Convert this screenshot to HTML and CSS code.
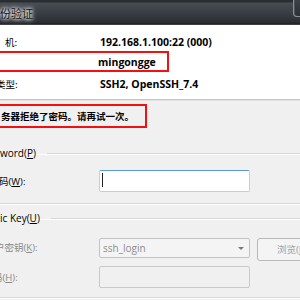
FILE: index.html
```html
<!DOCTYPE html>
<html lang="zh-CN">
<head>
<meta charset="utf-8">
<title>SSH用户身份验证</title>
<link rel="stylesheet" href="styles.css">
</head>
<body>
<div class="win">
  <div class="titlebar">
    <span class="title">份验证</span>
    <div class="close-btn"></div>
  </div>
  <div class="info">
    <div class="row">
      <span class="lbl lbl-host">机:</span><span class="val">192.168.1.100:22 (000)</span>
    </div>
    <div class="row mark">
      <span class="lbl"></span><span class="val">mingongge</span>
    </div>
    <div class="row row-last">
      <span class="lbl lbl-type">类型:</span><span class="val">SSH2, OpenSSH_7.4</span>
    </div>
  </div>
  <div class="sep"></div>
  <div class="msg mark">务器拒绝了密码。请再试一次。</div>
  <fieldset class="group group-pw">
    <legend>word(<u>P</u>)</legend>
    <div class="field">
      <label class="flbl flbl-w">码(<u>W</u>):</label>
      <div class="input focused"><span class="caret"></span></div>
    </div>
  </fieldset>
  <fieldset class="group group-key">
    <legend>ic Key(<u>U</u>)</legend>
    <div class="field">
      <label class="flbl flbl-k dis">户密钥(<u>K</u>):</label>
      <div class="select"><span>ssh_login</span><span class="arrow"></span></div>
      <div class="btn">浏览(<u>B</u>)...</div>
    </div>
    <div class="field">
      <label class="flbl flbl-h dis">码(<u>H</u>):</label>
      <div class="input disabled"></div>
    </div>
  </fieldset>
</div>
</body>
</html>
```

FILE: styles.css
```css
html, body {
  margin: 0;
  padding: 0;
}
body {
  width: 300px;
  height: 300px;
  overflow: hidden;
  background: #f0f0f0;
  font-family: "Open Sans", "Noto Sans CJK SC", sans-serif;
  font-size: 9.5px;
  color: #000;
}
.win {
  width: 300px;
}
.titlebar {
  height: 25px;
  box-sizing: border-box;
  display: flex;
  align-items: flex-start;
  background: linear-gradient(#2a2e32 0, #2a2e32 2px, #474d53 3px, #3a3f45 12px, #2c3035 22px, #1e2125 24px, #5c6166 25px);
}
.title {
  padding-top: 6px;
  white-space: nowrap;
  font-family: "Noto Sans CJK SC", sans-serif;
  font-size: 11px;
  line-height: 14px;
  color: #111;
  text-shadow: 0 0 4px #fff, 0 0 6px #e8e8e8, 0 0 3px #fff;
}
.close-btn {
  margin-left: auto;
  margin-right: -30px;
  width: 37px;
  height: 17px;
  box-sizing: border-box;
  border: 1px solid #8b9096;
  border-top: 0;
  border-radius: 0 0 4px 4px;
  background: linear-gradient(#3b4046, #2d3137);
  box-shadow: inset 1px 0 0 #4c5258;
}
.info {
  background: #fff;
  height: 74px;
  box-sizing: border-box;
  padding-top: 8px;
}
.row {
  display: flex;
  height: 18px;
  align-items: center;
  white-space: nowrap;
}
.row.mark {
  height: 21px;
  width: 171px;
  margin-left: -2px;
  box-sizing: border-box;
}
.row.mark .lbl {
  width: 98px;
}
.row-last {
  height: 24px;
}
.lbl {
  width: 100px;
  box-sizing: border-box;
  font-family: "Noto Sans CJK SC", sans-serif;
  font-size: 9.5px;
}
.lbl-host {
  padding-left: 5px;
}
.lbl-type {
  margin-left: -4px;
  width: 104px;
}
.val {
  font-weight: bold;
  font-size: 10.5px;
}
.mark {
  border: 2px solid #f21010;
}
.sep {
  height: 2px;
  background: linear-gradient(#c6c6c6 0, #c6c6c6 1px, #e2e2e2 1px);
}
.msg {
  margin-top: 3px;
  margin-left: -2px;
  width: 149px;
  height: 24px;
  box-sizing: border-box;
  padding-left: 1px;
  line-height: 20px;
  font-family: "Noto Sans CJK SC", sans-serif;
  font-weight: bold;
  font-size: 9.5px;
  white-space: nowrap;
}
.group {
  margin: 0 0 0 -10px;
  width: 400px;
  padding: 0;
  border: 1px solid #d6d9dc;
  border-radius: 3px;
  box-shadow: 0 1px 0 #fff, inset 0 1px 0 #fff;
  box-sizing: border-box;
}
.group legend {
  margin-left: 8px;
  padding: 0 11px 0 1px;
  font-size: 10px;
  line-height: 13px;
  white-space: nowrap;
}
.group-pw {
  margin-top: 19px;
  height: 57px;
}
.group-key {
  margin-top: 8px;
  height: 86px;
}
.field {
  display: flex;
  align-items: center;
  white-space: nowrap;
}
.group-pw .field {
  margin-top: 10px;
}
.group-key .field {
  margin-top: 13px;
  align-items: flex-start;
}
.group-key .field + .field {
  margin-top: 5px;
  align-items: center;
}
.flbl {
  width: 108px;
  box-sizing: border-box;
  font-size: 9.5px;
}
.flbl-w {
  padding-left: 8px;
}
.flbl-k {
  padding-left: 4px;
  line-height: 20px;
}
.flbl-h {
  padding-left: 2px;
}
.flbl.dis {
  color: #8a8a8a;
}
.input {
  width: 151px;
  height: 22px;
  box-sizing: border-box;
  border: 1px solid #c4c4c4;
  border-radius: 2px;
  background: #fff;
}
.input.focused {
  border-color: #b5d3ee;
  border-top-color: #5b9bd3;
  padding: 2px 0 0 2px;
}
.caret {
  display: block;
  width: 1px;
  height: 14px;
  background: #222;
}
.input.disabled {
  background: #f0f0f0;
  border-color: #c9c9c9;
}
.select {
  width: 151px;
  height: 20px;
  box-sizing: border-box;
  border: 1px solid #c3c3c3;
  border-radius: 2px;
  background: #f4f4f4;
  display: flex;
  align-items: center;
  padding: 0 5px 0 3px;
  color: #8d8d8d;
  font-size: 10px;
}
.arrow {
  margin-left: auto;
  width: 0;
  height: 0;
  border-left: 3px solid transparent;
  border-right: 3px solid transparent;
  border-top: 3px solid #7a7a7a;
}
.btn {
  margin-left: 7px;
  width: 70px;
  height: 23px;
  box-sizing: border-box;
  border: 1px solid #b8b8b8;
  border-radius: 3px;
  background: #f4f4f4;
  color: #a0a0a0;
  padding-left: 19px;
  line-height: 21px;
  font-size: 9.5px;
}
```
